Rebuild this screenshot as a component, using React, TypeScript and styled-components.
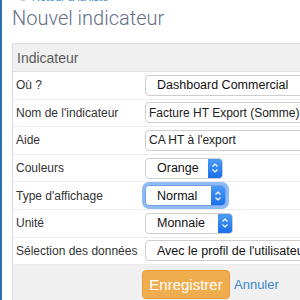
import styled, { createGlobalStyle } from 'styled-components';

const GlobalStyle = createGlobalStyle`
  body {
    margin: 0;
    background: #fff;
    font-family: 'Liberation Sans', Arial, sans-serif;
    overflow: hidden;
  }
`;

const Page = styled.div`
  border-left: 2px solid #2f6fae;
  padding-left: 10px;
  height: 310px;
  overflow: hidden;
  margin-top: -10px;
`;

const Crumb = styled.div`
  display: flex;
  align-items: center;
  gap: 5px;
  height: 13px;
  padding-left: 7px;
  font-size: 11px;
  color: #3a87c8;
`;

const CrumbDot = styled.span`
  width: 8px;
  height: 8px;
  border-radius: 50%;
  background: #c8c8c8;
`;

const Title = styled.h1`
  margin: 0 0 10px;
  font-family: 'Roboto', 'Liberation Sans', sans-serif;
  font-weight: 300;
  font-size: 20px;
  line-height: 30px;
  color: #616f86;
  white-space: nowrap;
`;

const Panel = styled.div`
  width: 320px;
  border: 1px solid #dcdcdc;
  border-right: none;
  background: #f0f0f0;
`;

const PanelHeading = styled.div`
  height: 27px;
  padding: 0 4px;
  display: flex;
  align-items: center;
  font-size: 14px;
  color: #5a5a5a;
  border-bottom: 1px solid #e3e3e3;
`;

const Row = styled.div`
  display: grid;
  grid-template-columns: 129px 1fr;
  align-items: center;
  height: 26.6px;
  padding: 0 3px;
  background: #fff;
  border-bottom: 1px solid #ececec;
`;

const Label = styled.span`
  font-size: 12px;
  color: #333;
  white-space: nowrap;
`;

const TextInput = styled.div`
  height: 21px;
  box-sizing: border-box;
  border: 1px solid #cfcfcf;
  border-radius: 4px;
  padding: 0 3px;
  display: flex;
  align-items: center;
  font-size: 12px;
  color: #222;
  white-space: nowrap;
  overflow: hidden;
`;

const Select = styled.div<{ $width?: number; $focus?: boolean }>`
  height: 21px;
  box-sizing: border-box;
  width: ${({ $width }) => ($width ? `${$width}px` : 'auto')};
  border: 1px solid ${({ $focus }) => ($focus ? '#6fa2ef' : '#cdcdcd')};
  border-radius: 4px;
  display: flex;
  align-items: stretch;
  font-size: 12.5px;
  color: #111;
  background: #fff;
  box-shadow: ${({ $focus }) => ($focus ? '0 0 0 3px #8fbaf5' : 'none')};
  overflow: hidden;
  white-space: nowrap;
`;

const SelectText = styled.span`
  flex: 1;
  display: flex;
  align-items: center;
  padding-left: 11px;
`;

const Arrow = styled.span`
  width: 14px;
  background: linear-gradient(#4c9cf7, #1a6fe8);
  display: flex;
  align-items: center;
  justify-content: center;
`;

const Footer = styled.div`
  display: flex;
  align-items: flex-start;
  gap: 4px;
  padding: 5px 0 0 129px;
  height: 40px;
  box-sizing: border-box;
`;

const SaveButton = styled.button`
  width: 88px;
  height: 29px;
  border: 1px solid #e89c3c;
  border-radius: 4px;
  background: #f0ad4e;
  color: #fff;
  font-family: 'Liberation Sans', Arial, sans-serif;
  font-size: 15px;
  padding: 0;
`;

const CancelLink = styled.a`
  font-size: 13px;
  color: #3a87c8;
  line-height: 29px;
  text-decoration: none;
`;

const Chevrons = () => (
  <svg width="8" height="12" viewBox="0 0 8 12">
    <path d="M1.5 4.5 L4 2 L6.5 4.5 M1.5 7.5 L4 10 L6.5 7.5" fill="none" stroke="#fff" strokeWidth="1.2" />
  </svg>
);

const SelectBox = ({ value, width, focus, arrow }: { value: string; width?: number; focus?: boolean; arrow?: boolean }) => (
  <Select $width={width} $focus={focus}>
    <SelectText>{value}</SelectText>
    {arrow ? (
      <Arrow>
        <Chevrons />
      </Arrow>
    ) : null}
  </Select>
);

const App = () => (
  <>
    <GlobalStyle />
    <Page>
      <Crumb>
        <CrumbDot />
        <span>Retour à la liste</span>
      </Crumb>
      <Title>Nouvel indicateur</Title>
      <Panel>
        <PanelHeading>Indicateur</PanelHeading>
        <Row>
          <Label>Où ?</Label>
          <SelectBox value="Dashboard Commercial" width={190} />
        </Row>
        <Row>
          <Label>Nom de l'indicateur</Label>
          <TextInput>Facture HT Export (Somme)</TextInput>
        </Row>
        <Row>
          <Label>Aide</Label>
          <TextInput>CA HT à l'export</TextInput>
        </Row>
        <Row>
          <Label>Couleurs</Label>
          <SelectBox value="Orange" width={78} arrow />
        </Row>
        <Row>
          <Label>Type d'affichage</Label>
          <SelectBox value="Normal" width={81} arrow focus />
        </Row>
        <Row>
          <Label>Unité</Label>
          <SelectBox value="Monnaie" width={88} arrow />
        </Row>
        <Row>
          <Label>Sélection des données</Label>
          <SelectBox value="Avec le profil de l'utilisateur" width={190} />
        </Row>
        <Footer>
          <SaveButton>Enregistrer</SaveButton>
          <CancelLink href="#">Annuler</CancelLink>
        </Footer>
      </Panel>
    </Page>
  </>
);

export default App;
